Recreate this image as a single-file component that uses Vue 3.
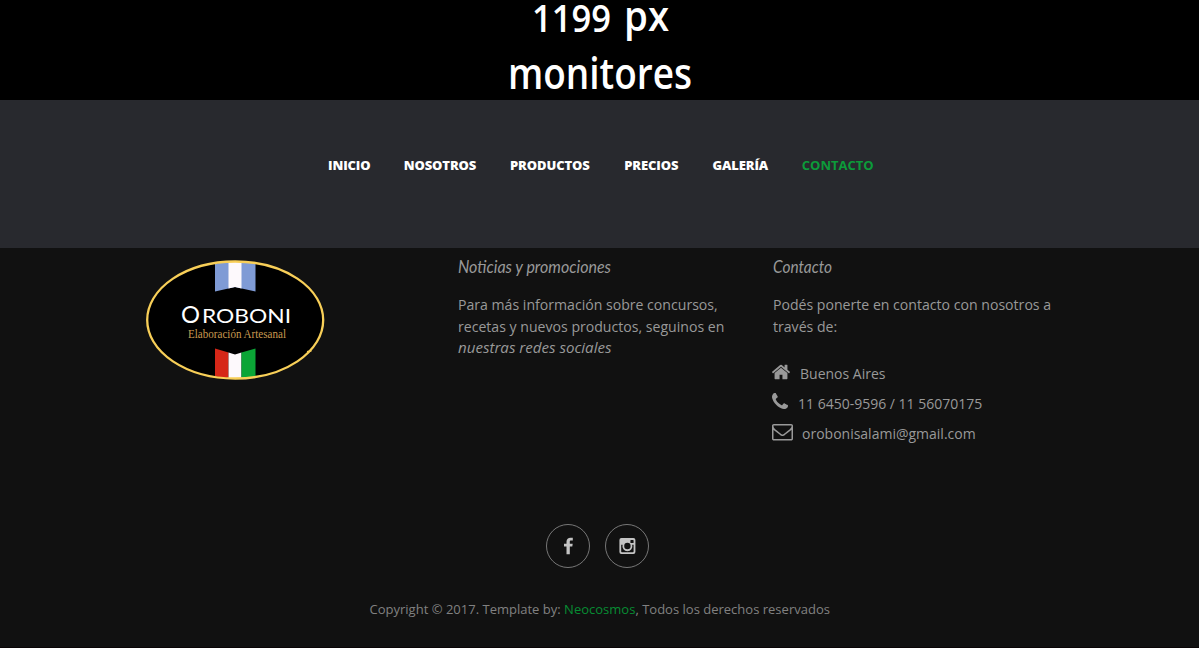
<script setup>
const links = [
  { label: 'INICIO', width: 42.5 },
  { label: 'NOSOTROS', width: 73 },
  { label: 'PRODUCTOS', width: 81 },
  { label: 'PRECIOS', width: 55 },
  { label: 'GALERÍA', width: 56 },
  { label: 'CONTACTO', width: 73, active: true },
]
</script>

<template>
  <div class="page">
    <header class="banner">
      <svg width="220" height="100" viewBox="490 0 220 100">
        <g class="banner-text">
          <text x="532" y="31.500" font-size="38.500" textLength="79" lengthAdjust="spacingAndGlyphs">1199</text>
          <text x="624" y="31" font-size="42" textLength="45" lengthAdjust="spacingAndGlyphs">px</text>
          <text x="508" y="88.500" font-size="44" textLength="184" lengthAdjust="spacingAndGlyphs">monitores</text>
        </g>
      </svg>
    </header>

    <nav class="nav">
      <a v-for="l in links" :key="l.label" :class="{ active: l.active }" :style="{ width: l.width + 'px' }">{{ l.label }}</a>
    </nav>

    <footer class="footer">
      <div class="columns">
        <div class="col brand">
          <svg width="182" height="124" viewBox="144 258 182 124">
            <ellipse cx="235.2" cy="320" rx="88" ry="58.500" fill="#000" />
            <path d="M215 263.500Q235 260 255.500 263.500V291.500L235 287L215 291.500Z" fill="#7f9bd5" />
            <path d="M228.500 262H241.500V288.500L235 287L228.500 288.500Z" fill="#fdf9fc" />
            <path d="M215 348.500L228.500 352.500V378L215 376.500Z" fill="#d62718" />
            <path d="M228.500 352.500L235 354.500L241.500 352.500V378H228.500Z" fill="#fdf9fc" />
            <path d="M241.500 352.500L255.500 348.500V376.500L241.500 378Z" fill="#0ba536" />
            <ellipse cx="235.200" cy="320" rx="88" ry="58.500" fill="none" stroke="#f8cf58" stroke-width="2.300" />
            <path d="M307 351.800L311.500 350.800" stroke="#f8cf58" stroke-width="1.500" />
            <g class="brand-name">
              <text x="181" y="322.500" font-size="24" textLength="19" lengthAdjust="spacingAndGlyphs">O</text>
              <text x="202" y="322.500" font-size="18.500" textLength="89" lengthAdjust="spacingAndGlyphs">ROBONI</text>
            </g>
            <text class="brand-tag" x="188" y="337.500" font-size="13" textLength="98" lengthAdjust="spacingAndGlyphs">Elaboración Artesanal</text>
          </svg>
        </div>

        <div class="col">
          <svg class="title" width="200" height="30" viewBox="0 0 200 30">
            <text x="0" y="17" textLength="153" lengthAdjust="spacingAndGlyphs">Noticias y promociones</text>
          </svg>
          <p>Para más información sobre concursos,<br>recetas y nuevos productos, seguinos en<br><em>nuestras redes sociales</em></p>
        </div>

        <div class="col">
          <svg class="title" width="200" height="30" viewBox="0 0 200 30">
            <text x="0" y="17" textLength="59" lengthAdjust="spacingAndGlyphs">Contacto</text>
          </svg>
          <p>Podés ponerte en contacto con nosotros a<br>través de:</p>
          <ul class="contact">
            <li>
              <svg class="home" width="20" height="20" viewBox="0 0 1792 1792"><path d="M1472 992v480q0 26-19 45t-45 19h-384v-384h-256v384h-384q-26 0-45-19t-19-45v-480q0-1 .5-3t.5-3l575-474 575 474q1 2 1 6zm223-69l-62 74q-8 9-21 11h-3q-13 0-21-7l-692-577-692 577q-12 8-24 7-13-2-21-11l-62-74q-8-10-7-23.500t11-21.500l719-599q32-26 76-26t76 26l244 204v-195q0-14 9-23t23-9h192q14 0 23 9t9 23v408l219 182q10 8 11 21.500t-7 23.500z" /></svg>
              <span>Buenos Aires</span>
            </li>
            <li>
              <svg class="phone" width="16" height="16" viewBox="192 128 1408 1408"><path d="M1600 1240q0 27-10 70.500t-21 68.500q-21 50-122 106-94 51-186 51-27 0-53-3.500t-57.500-12.500-47-14.500-55.500-20.500-49-18q-98-35-175-83-127-79-264-216t-216-264q-48-77-83-175-3-9-18-49t-20.500-55.500-14.500-47-12.500-57.500-3.500-53q0-92 51-186 56-101 106-122 25-11 68.500-21t70.500-10q14 0 21 3 18 6 53 76 11 19 30 54t35 63.500 31 53.500q3 4 17.500 25t21.500 35.500 7 28.500q0 20-28.500 50t-62 55-62 53-28.500 46q0 9 5 22.500t8.500 20.500 14 24 11.500 19q76 137 174 235t235 174q2 1 19 11.500t24 14 20.500 8.500 22.500 5q18 0 46-28.500t53-62 55-62 50-28.500q14 0 28.500 7t35.500 21.500 25 17.500q25 15 53.500 31t63.500 35 54 30q70 35 76 53 3 7 3 21z" /></svg>
              <span>11 6450-9596 / 11 56070175</span>
            </li>
            <li>
              <svg class="mail" width="21" height="21" viewBox="0 0 1792 1792"><path d="M1664 1504v-768q-32 36-69 66-268 206-426 338-51 43-83 67t-86.500 48.500-102.500 24.500h-2q-48 0-102.500-24.500t-86.500-48.500-83-67q-158-132-426-338-37-30-69-66v768q0 13 9.500 22.500t22.500 9.500h1472q13 0 22.500-9.500t9.500-22.500zm0-1051v-24.500l-.5-13-3-12.500-5.500-9-9-7.500-14-2.500h-1472q-13 0-22.500 9.500t-9.500 22.500q0 168 147 284 193 152 401 317 6 5 35 29.500t46 37.500 44.500 31.500 50.500 27.500 43 9h2q20 0 43-9t50.500-27.500 44.500-31.500 46-37.500 35-29.500q208-165 401-317 54-43 100.500-115.500t46.500-131.500zm128-37v1088q0 66-47 113t-113 47h-1472q-66 0-113-47t-47-113v-1088q0-66 47-113t113-47h1472q66 0 113 47t47 113z" /></svg>
              <span>orobonisalami@gmail.com</span>
            </li>
          </ul>
        </div>
      </div>

      <div class="social">
        <a>
          <svg width="18" height="18" viewBox="0 0 18 18"><path d="M13.800 .8V3.600H12.100C11 3.600 10.800 4.100 10.800 4.900V6.700H13.700L13.300 9.600H10.800V17.200H7.500V9.600H5V6.700H7.500V4.500C7.500 2 9.300 .7 11.500 .7C12.600 .7 13.500 .75 13.800 .8Z" /></svg>
        </a>
        <a>
          <svg width="18" height="18" viewBox="0 0 18 18"><path transform="translate(.4 0)" fill-rule="evenodd" d="M3 1H15Q17 1 17 3V15Q17 17 15 17H3Q1 17 1 15V3Q1 1 3 1ZM12.600 2.900Q12 2.900 12 3.500V5.400Q12 6 12.600 6H14.600Q15.200 6 15.200 5.400V3.500Q15.200 2.900 14.600 2.900ZM2.800 7.800V14.500Q2.800 15.200 3.500 15.200H14.500Q15.200 15.200 15.200 14.500V7.800H13.800A5 5 0 1 1 4.200 7.800ZM9 5.800A3.200 3.200 0 1 0 9 12.200A3.200 3.200 0 1 0 9 5.800Z" /></svg>
        </a>
      </div>

      <p class="copyright">Copyright © 2017. Template by: <a>Neocosmos</a>, Todos los derechos reservados</p>
    </footer>
  </div>
</template>

<style>
body {
  margin: 0;
  background: #111;
}
</style>

<style scoped>
.page {
  width: 1199px;
  height: 648px;
  display: flex;
  flex-direction: column;
  font-family: "Open Sans", sans-serif;
  color: #999;
  background: #111;
}
.banner {
  height: 100px;
  background: #000;
  display: flex;
  justify-content: center;
}
.banner svg {
  display: block;
  overflow: visible;
}
.banner-text {
  fill: #fff;
  font-family: "Open Sans", sans-serif;
  font-weight: 600;
}
.nav {
  height: 148px;
  box-sizing: border-box;
  padding: 55px 0 0 328px;
  background: #28292e;
  display: flex;
  gap: 33.250px;
  font-size: 13px;
  font-weight: 800;
  letter-spacing: -0.120px;
  line-height: 21px;
  color: #fff;
  white-space: nowrap;
}
.nav .active {
  color: #0c9b3a;
  font-weight: 700;
  letter-spacing: 0;
}
.footer {
  flex: 1;
  box-sizing: border-box;
  border-bottom: 1px solid #0a0506;
}
.columns {
  display: grid;
  grid-template-columns: 314px 315px 330px;
  padding-left: 144px;
  height: 276px;
}
.brand {
  padding-top: 10px;
}
.brand-name {
  fill: #fff;
  font-family: Lato, sans-serif;
}
.brand-tag {
  fill: #c99a50;
  font-family: "Liberation Serif", serif;
}
.title {
  display: block;
  margin-top: 8px;
  overflow: visible;
  fill: #999;
  font-family: Lato, sans-serif;
  font-size: 17px;
  font-style: italic;
}
.col p {
  margin: 8px 0 0;
  font-size: 14.100px;
  line-height: 21.500px;
  white-space: nowrap;
}
.col em {
  font-size: 15.100px;
}
.contact {
  list-style: none;
  margin: 21px 0 0 -1px;
  padding: 0;
  font-size: 14px;
}
.contact li {
  display: flex;
  align-items: center;
  height: 30px;
}
.contact svg {
  fill: #999;
  flex: none;
}
.home {
  margin: -3px 9px 0 -1px;
}
.phone {
  margin: -4px 10px 0 0;
}
.mail {
  margin: -3px 9px 0 0;
}
.social {
  display: flex;
  gap: 15px;
  padding-left: 546px;
}
.social a {
  width: 42px;
  height: 42px;
  border: 1px solid #777;
  border-radius: 50%;
  display: flex;
  align-items: center;
  justify-content: center;
}
.social svg {
  fill: #c4c4c4;
}
.copyright {
  margin: 31px 0 0 369.500px;
  font-size: 13.030px;
  line-height: 20px;
  color: #818181;
  white-space: nowrap;
}
.copyright a {
  color: #078c33;
}
</style>
